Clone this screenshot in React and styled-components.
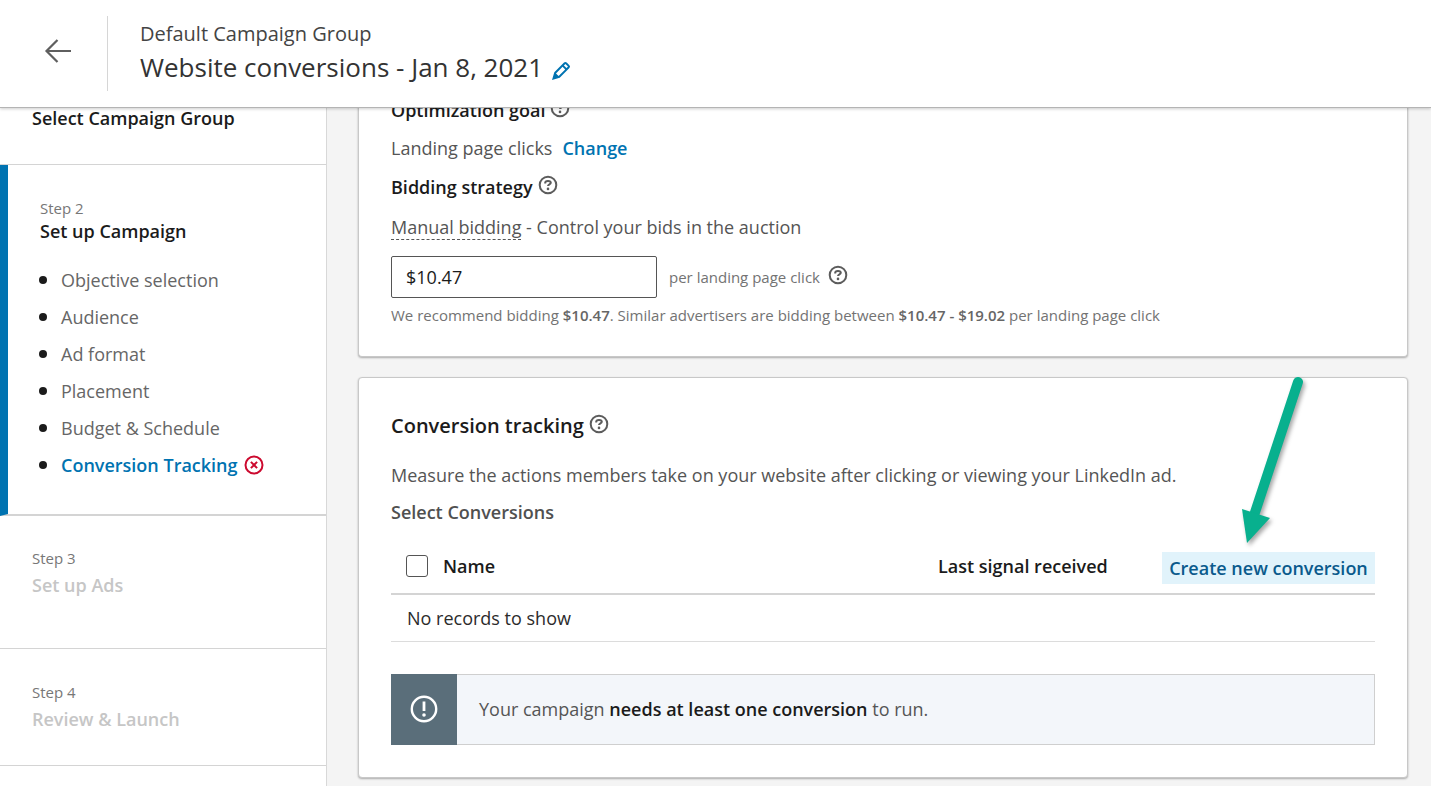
import React from "react";
import styled, { createGlobalStyle, css } from "styled-components";

const GlobalStyle = createGlobalStyle`
  *, *::before, *::after { box-sizing: border-box; }
  body {
    margin: 0;
    background: #f4f4f4;
    color: #1b1b1b;
    font-family: "Open Sans", "Noto Sans", sans-serif;
    font-size: 18px;
    line-height: 24px;
  }
  h1, h2, h3, p, ul { margin: 0; padding: 0; font: inherit; }
  button, input { font: inherit; color: inherit; }
`;

const Page = styled.div`
  display: flex;
  flex-direction: column;
  height: 100vh;
  overflow: hidden;
`;

const Header = styled.header`
  position: relative;
  z-index: 2;
  flex: none;
  display: flex;
  align-items: center;
  padding: 16px 44px;
  background: #fff;
  border-bottom: 1px solid #b4b4b4;
  box-shadow: 0 1px 3px rgba(0, 0, 0, 0.2);
`;

const IconButton = styled.button`
  display: inline-flex;
  flex: none;
  padding: 0;
  margin: ${(p) => p.$margin || "0"};
  border: 0;
  background: none;
  cursor: pointer;
`;

const Titles = styled.div`
  margin-left: 35px;
  padding-left: 32px;
  border-left: 1px solid #d6d6d6;
  height: 75px;
`;

const GroupName = styled.p`
  padding-top: 2px;
  font-size: 20px;
  line-height: 32px;
  color: #444;
`;

const CampaignName = styled.h1`
  display: flex;
  align-items: center;
  gap: 8px;
  font-size: 26px;
  line-height: 34px;
  color: #333;
`;

const Columns = styled.div`
  flex: 1;
  display: flex;
  min-height: 0;
  margin-top: -10px;
`;

const Sidebar = styled.nav`
  flex: none;
  width: 327px;
  padding-top: 8px;
  background: #fff;
  border-right: 1px solid #d8d8d8;
`;

const Step = styled.section`
  padding: ${(p) => p.$top} 24px ${(p) => p.$bottom} 32px;
  border-bottom: 1px solid #d4d4d4;
  ${(p) => p.$active && css`
    border-left: 8px solid #0073b1;
    border-bottom-width: 2px;
  `}
`;

const StepLabel = styled.p`
  font-size: 15px;
  line-height: ${(p) => (p.$tight ? "22px" : "30px")};
  color: #777;
`;

const StepTitle = styled.h2`
  font-weight: 600;
  color: ${(p) => (p.$muted ? "#c6c6c6" : "#1b1b1b")};
`;

const SubSteps = styled.ul`
  list-style: none;
  margin: 18px 0 0 -1px;
`;

const SubStep = styled.li`
  display: flex;
  align-items: center;
  gap: 14px;
  height: 37px;
  &::before {
    content: "";
    width: 8px;
    height: 8px;
    border-radius: 50%;
    background: #1b1b1b;
  }
`;

const SubStepLink = styled.a`
  display: inline-flex;
  align-items: center;
  gap: 6px;
  color: ${(p) => (p.$current ? "#0073b1" : "#666")};
  font-weight: ${(p) => (p.$current ? 600 : 400)};
  text-decoration: none;
`;

const Main = styled.main`
  flex: 1;
  min-width: 0;
  display: flex;
  flex-direction: column;
  gap: 20px;
  padding: 0 23px 0 31px;
`;

const Card = styled.section`
  position: relative;
  flex: none;
  padding: ${(p) => p.$pad};
  background: #fff;
  border: 1px solid #c8c8c8;
  border-top-width: ${(p) => (p.$cut ? "0" : "1px")};
  border-radius: ${(p) => (p.$cut ? "0 0 4px 4px" : "4px")};
  box-shadow: 0 1px 2px rgba(0, 0, 0, 0.3);
`;

const Label = styled.h3`
  display: flex;
  align-items: center;
  gap: 5px;
  font-size: ${(p) => (p.$large ? "20px" : "18px")};
  font-weight: 600;
`;

const Line = styled.p`
  margin: ${(p) => p.$space || "0"};
  color: #555;
`;

const TextLink = styled.a`
  margin-left: 10px;
  color: #0073b1;
  font-weight: 600;
  text-decoration: none;
`;

const Term = styled.span`
  display: inline-block;
  border-bottom: 1px dashed #555;
`;

const BidRow = styled.div`
  display: flex;
  align-items: center;
  gap: 12px;
  margin-top: 16px;
`;

const BidInput = styled.input`
  width: 266px;
  height: 42px;
  padding: 0 14px;
  border: 1px solid #555;
  border-radius: 2px;
  background: #fff;
`;

const BidLabel = styled.label`
  display: inline-flex;
  align-items: center;
  gap: 8px;
  font-size: 15px;
  color: #737373;
`;

const Hint = styled.p`
  margin-top: 5px;
  font-size: 15px;
  color: #737373;
  b { font-weight: 600; color: #666; }
`;

const Subheading = styled.h3`
  margin-top: 13px;
  font-weight: 600;
  color: #505050;
`;

const Table = styled.table`
  width: 100%;
  margin-top: 16px;
  border-collapse: collapse;
  text-align: left;
`;

const HeadCell = styled.th`
  height: 54px;
  width: ${(p) => p.$width || "auto"};
  padding: ${(p) => p.$pad || "0 0 2px"};
  border-bottom: 2px solid #d4d4d4;
  font-weight: 600;
  white-space: nowrap;
`;

const Cell = styled.td`
  height: 47px;
  padding: 0 16px;
  border-bottom: 1px solid #dcdcdc;
  color: #2b2b2b;
`;

const Checkbox = styled.input`
  appearance: none;
  display: block;
  width: 22px;
  height: 22px;
  margin: 0;
  border: 1px solid #555;
  border-radius: 3px;
  background: #fff;
`;

const CreateButton = styled.button`
  display: block;
  width: 100%;
  height: 32px;
  padding: 0;
  border: 0;
  background: #e1f3fb;
  color: #0a5a8c;
  font-weight: 600;
  cursor: pointer;
`;

const Notice = styled.div`
  display: flex;
  margin-top: 32px;
  height: 71px;
  background: #f3f6fa;
  border: 1px solid #cfcfcf;
  border-left: 0;
`;

const NoticeIcon = styled.div`
  display: flex;
  align-items: center;
  justify-content: center;
  flex: none;
  width: 66px;
  margin: -1px 0;
  background: #5a6e7a;
`;

const NoticeText = styled.p`
  align-self: center;
  padding: 0 22px;
  color: #555;
  b { font-weight: 600; color: #1b1b1b; }
`;

const Pointer = styled.svg`
  position: absolute;
  top: -8px;
  right: 87px;
  pointer-events: none;
  filter: drop-shadow(2px 3px 2px rgba(0, 0, 0, 0.35));
`;

const HelpIcon = () => (
  <svg width="20" height="20" viewBox="0 0 20 20" fill="none" stroke="#5c5c5c" strokeWidth="2" aria-hidden="true">
    <circle cx="10" cy="10" r="8.300" />
    <path d="M7.200 8.400V7.800c0-1.200 1-1.900 2.800-1.900s2.800.7 2.800 1.900c0 1.500-2.800 1.600-2.800 3.300" />
    <circle cx="10" cy="13.900" r="1.300" fill="#5c5c5c" stroke="none" />
  </svg>
);

const Help = ({ label }) => (
  <IconButton type="button" aria-label={label} $margin="0 0 4px">
    <HelpIcon />
  </IconButton>
);

const BackIcon = () => (
  <svg width="28" height="28" viewBox="0 0 28 28" fill="none" stroke="#5f5f5f" strokeWidth="2.200" aria-hidden="true">
    <path d="M27 14H2.500M13.500 3L2.500 14l11 11" />
  </svg>
);

const PencilIcon = () => (
  <svg width="20" height="20" viewBox="0 0 20 20" aria-hidden="true">
    <path
      fill="#0073b1"
      fillRule="evenodd"
      d="M18.400 4.300l-2.700-2.700a1.900 1.900 0 0 0-2.700 0L3.300 11.300 1 19l7.700-2.300L18.400 7a1.900 1.900 0 0 0 0-2.700zM5 12.400l6.600-6.600 2.600 2.600-6.600 6.600zM12.900 4.500l1.500-1.500 2.600 2.600-1.500 1.500z"
    />
  </svg>
);

const ErrorIcon = () => (
  <svg width="20" height="20" viewBox="0 0 20 20" fill="none" stroke="#cc0a2f" strokeWidth="2" aria-hidden="true">
    <circle cx="10" cy="10" r="8.500" />
    <path d="M6.900 6.900l6.200 6.200M13.100 6.900l-6.200 6.200" />
  </svg>
);

const AlertIcon = () => (
  <svg width="28" height="28" viewBox="0 0 28 28" fill="none" stroke="#fff" aria-hidden="true">
    <circle cx="14" cy="14" r="12.200" strokeWidth="2.400" />
    <path d="M14 6.500v9.500" strokeWidth="2.800" />
    <circle cx="14" cy="20" r="1.800" fill="#fff" stroke="none" />
  </svg>
);

const subSteps = [
  "Objective selection",
  "Audience",
  "Ad format",
  "Placement",
  "Budget & Schedule",
  "Conversion Tracking",
];

export default function App() {
  return (
    <>
      <GlobalStyle />
      <Page>
        <Header>
          <IconButton type="button" aria-label="Back" $margin="0 0 6px">
            <BackIcon />
          </IconButton>
          <Titles>
            <GroupName>Default Campaign Group</GroupName>
            <CampaignName>
              Website conversions - Jan 8, 2021
              <IconButton type="button" aria-label="Edit campaign name" $margin="8px 0 0">
                <PencilIcon />
              </IconButton>
            </CampaignName>
          </Titles>
        </Header>
        <Columns>
          <Sidebar>
            <Step $top="0" $bottom="34px">
              <StepTitle>Select Campaign Group</StepTitle>
            </Step>
            <Step $top="32px" $bottom="31px" $active>
              <StepLabel $tight>Step 2</StepLabel>
              <StepTitle>Set up Campaign</StepTitle>
              <SubSteps>
                {subSteps.map((name) => {
                  const current = name === "Conversion Tracking";
                  return (
                    <SubStep key={name}>
                      <SubStepLink href="#" $current={current}>
                        {name}
                        {current && <ErrorIcon />}
                      </SubStepLink>
                    </SubStep>
                  );
                })}
              </SubSteps>
            </Step>
            <Step $top="27px" $bottom="51px">
              <StepLabel>Step 3</StepLabel>
              <StepTitle $muted>Set up Ads</StepTitle>
            </Step>
            <Step $top="28px" $bottom="34px">
              <StepLabel>Step 4</StepLabel>
              <StepTitle $muted>Review &amp; Launch</StepTitle>
            </Step>
          </Sidebar>
          <Main>
            <Card $cut $pad="0 32px 29px">
              <Label>
                Optimization goal <Help label="About optimization goal" />
              </Label>
              <Line $space="14px 0 15px">
                Landing page clicks
                <TextLink href="#">Change</TextLink>
              </Line>
              <Label>
                Bidding strategy <Help label="About bidding strategy" />
              </Label>
              <Line $space="16px 0 0">
                <Term>Manual bidding</Term> - Control your bids in the auction
              </Line>
              <BidRow>
                <BidInput id="bid" type="text" defaultValue="$10.47" />
                <BidLabel htmlFor="bid">
                  per landing page click <Help label="About bids" />
                </BidLabel>
              </BidRow>
              <Hint>
                We recommend bidding <b>$10.47</b>. Similar advertisers are bidding between{" "}
                <b>$10.47 - $19.02</b> per landing page click
              </Hint>
            </Card>
            <Card $pad="36px 32px 32px">
              <Label $large>
                Conversion tracking <Help label="About conversion tracking" />
              </Label>
              <Line $space="25px 0 0">
                Measure the actions members take on your website after clicking or viewing your LinkedIn ad.
              </Line>
              <Subheading>Select Conversions</Subheading>
              <Table>
                <thead>
                  <tr>
                    <HeadCell $width="52px" $pad="0 0 2px 15px">
                      <Checkbox type="checkbox" aria-label="Select all conversions" />
                    </HeadCell>
                    <HeadCell>Name</HeadCell>
                    <HeadCell $width="224px">Last signal received</HeadCell>
                    <HeadCell $width="213px" $pad="2px 0 0">
                      <CreateButton type="button">Create new conversion</CreateButton>
                    </HeadCell>
                  </tr>
                </thead>
                <tbody>
                  <tr>
                    <Cell colSpan={4}>No records to show</Cell>
                  </tr>
                </tbody>
              </Table>
              <Notice role="status">
                <NoticeIcon>
                  <AlertIcon />
                </NoticeIcon>
                <NoticeText>
                  Your campaign <b>needs at least one conversion</b> to run.
                </NoticeText>
              </Notice>
              <Pointer width="90" height="180" viewBox="0 0 90 180" aria-hidden="true">
                <path d="M68 12L21.500 153" stroke="#08b08e" strokeWidth="10" strokeLinecap="round" />
                <path d="M12 139l28 9-23 25z" fill="#08b08e" />
              </Pointer>
            </Card>
          </Main>
        </Columns>
      </Page>
    </>
  );
}
